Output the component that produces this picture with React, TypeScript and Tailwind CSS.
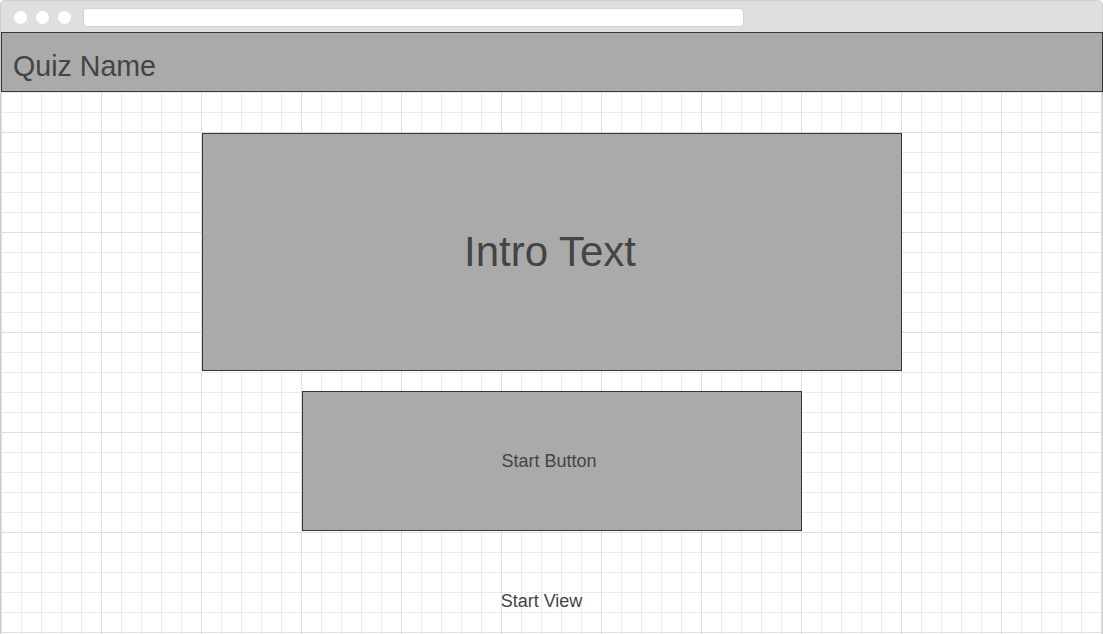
const font = { fontFamily: '"Liberation Sans", Arial, sans-serif' }

function WindowBar() {
  return (
    <div className="flex h-[31px] items-start bg-[#dfdfdf] pl-[13px]">
      <div className="mt-[10px] flex gap-[9px]">
        <div className="h-[13px] w-[13px] rounded-full bg-white" />
        <div className="h-[13px] w-[13px] rounded-full bg-white" />
        <div className="h-[13px] w-[13px] rounded-full bg-white" />
      </div>
      <div className="ml-[12px] mt-[7px] h-[19px] w-[661px] rounded-[4px] border border-[#d4d4d4] bg-white" />
    </div>
  )
}

export default function App() {
  return (
    <div className="h-[634px] w-[1103px] overflow-hidden bg-white text-[#444]" style={font}>
      <div className="h-[700px] rounded-t-[5px] border-l border-r border-t border-[#cfcfcf]">
        <WindowBar />
        <div className="h-[680px] bg-[linear-gradient(to_right,#dedede_1px,transparent_1px),linear-gradient(to_bottom,#dedede_1px,transparent_1px),linear-gradient(to_right,#ececec_1px,transparent_1px),linear-gradient(to_bottom,#ececec_1px,transparent_1px)] bg-[size:100px_100px,100px_100px,20px_20px,20px_20px]">
          {/* header */}
          <div className="mr-[-1px] flex h-[60px] border border-[#363636] bg-[#aaaaaa] pl-[11px] pt-[19px]">
            <span className="text-[28.6px] leading-[28px]">Quiz Name</span>
          </div>

          <div className="flex flex-col items-center">
            <div className="mt-[41px] flex h-[238px] w-[700px] items-center justify-center border border-[#363636] bg-[#aaaaaa] pr-[3px]">
              <span className="text-[42px] leading-[42px]">Intro Text</span>
            </div>
            <div className="mt-[20px] flex h-[140px] w-[500px] items-center justify-center border border-[#363636] bg-[#aaaaaa] pr-[5px]">
              <span className="text-[18px] leading-[18px]">Start Button</span>
            </div>
            <div className="mr-[20px] mt-[60px] text-[18px] leading-[21px]">Start View</div>
          </div>
        </div>
      </div>
    </div>
  )
}
